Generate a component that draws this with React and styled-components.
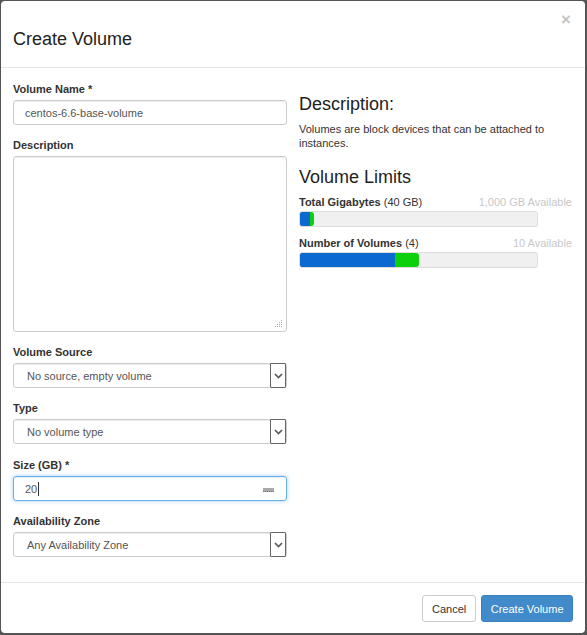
import React from 'react'
import styled, { createGlobalStyle } from 'styled-components'

const GlobalStyle = createGlobalStyle`
  html, body {
    margin: 0;
    padding: 0;
    background: #555;
    font-family: 'Liberation Sans', Arial, sans-serif;
    color: #333;
  }
`

const Modal = styled.div`
  box-sizing: border-box;
  width: 584px;
  height: 632px;
  margin: 1px 0 0 1px;
  background: #fff;
  border-radius: 4px;
  display: flex;
  flex-direction: column;
`

const Header = styled.div`
  position: relative;
  box-sizing: border-box;
  height: 67px;
  padding: 10px 12px 0;
  display: flex;
  align-items: center;
  border-bottom: 1px solid #e5e5e5;
`

const Title = styled.h4`
  margin: 0;
  font-size: 18px;
  font-weight: normal;
  color: #222;
`

const Close = styled.span`
  position: absolute;
  right: 14px;
  top: 9px;
  font-size: 17px;
  font-weight: bold;
  color: #c4c4c4;
`

const Body = styled.div`
  flex: 1;
  display: grid;
  grid-template-columns: 274px 1fr;
  gap: 12px;
  padding: 14px 12px 12px;
`

const Column = styled.div`
  display: flex;
  flex-direction: column;
`

const Group = styled.div`
  margin-bottom: ${p => p.$gap || 13}px;
  &:last-child { margin-bottom: 0; }
`

const Label = styled.div`
  font-size: 11px;
  line-height: 14px;
  font-weight: bold;
  color: #333;
  margin-bottom: 4px;
`

const Field = styled.div`
  position: relative;
  box-sizing: border-box;
  height: ${p => p.$tall ? '176px' : '25px'};
  border: 1px solid ${p => p.$focus ? '#66afe9' : '#ccc'};
  border-radius: 3px;
  box-shadow: ${p => p.$focus ? 'inset 0 1px 1px rgba(0,0,0,.075), 0 0 4px rgba(102,175,233,.6)' : 'inset 0 1px 1px rgba(0,0,0,.075)'};
  padding: 0 ${p => p.$select ? '13px' : '11px'};
  display: flex;
  align-items: center;
  font-size: 11px;
  color: #555;
`

const Caret = styled.span`
  display: inline-block;
  width: 1px;
  height: 14px;
  background: #333;
  margin-left: 1px;
`

const Spinner = styled.span`
  position: absolute;
  right: 12px;
  top: 11px;
  width: 11px;
  height: 3px;
  background: #aaa;
  border-bottom: 1px dotted #777;
`

const Arrow = styled.span`
  position: absolute;
  right: 0;
  top: -1px;
  bottom: -1px;
  width: 16px;
  box-sizing: border-box;
  border: 1px solid #666;
  border-radius: 1px;
  background: #fff;
  display: flex;
  align-items: center;
  justify-content: center;
`

const Grip = styled.svg`
  position: absolute;
  right: 3px;
  bottom: 3px;
`

const Heading = styled.h3`
  margin: ${p => p.$first ? '12px' : '0'} 0 0;
  font-size: 18px;
  line-height: 20px;
  font-weight: normal;
  color: #222;
`

const Text = styled.p`
  margin: 8px 0 17px;
  font-size: 11px;
  line-height: 14px;
  color: #333;
`

const Limit = styled.div`
  width: 273px;
  margin-top: ${p => p.$first ? '8px' : '9px'};
`

const LimitHead = styled.div`
  display: flex;
  justify-content: space-between;
  font-size: 11px;
  line-height: 14px;
  color: #333;
  b { font-weight: bold; }
`

const Avail = styled.span`
  color: #c8c8c8;
`

const Track = styled.div`
  box-sizing: border-box;
  width: 239px;
  height: 16px;
  margin-top: 2px;
  background: #f0f0f0;
  border: 1px solid #ddd;
  border-radius: 3px;
  display: flex;
  overflow: hidden;
`

const Fill = styled.div`
  height: 100%;
  background: ${p => p.$color};
  border-radius: ${p => p.$last ? '0 3px 3px 0' : '0'};
`

const Footer = styled.div`
  height: 51px;
  box-sizing: border-box;
  border-top: 1px solid #e5e5e5;
  padding: 12px 12px 0;
  display: flex;
  justify-content: flex-end;
  gap: 5px;
`

const Button = styled.button`
  height: 27px;
  padding: 0 ${p => p.$primary ? '8.5px' : '9px'};
  font-family: inherit;
  font-size: 11px;
  border-radius: 3px;
  border: 1px solid ${p => p.$primary ? '#3a81c2' : '#ccc'};
  background: ${p => p.$primary ? '#428bca' : '#fff'};
  color: ${p => p.$primary ? '#fff' : '#333'};
`

const Chevron = () => (
  <svg width="9" height="6" viewBox="0 0 9 6">
    <path d="M1 1 L4.5 4.5 L8 1" fill="none" stroke="#555" strokeWidth="1.6" />
  </svg>
)

const Select = ({ children }) => (
  <Field $select>
    {children}
    <Arrow><Chevron /></Arrow>
  </Field>
)

const limits = [
  { name: 'Total Gigabytes', note: '(40 GB)', avail: '1,000 GB Available', used: 10, added: 4 },
  { name: 'Number of Volumes', note: '(4)', avail: '10 Available', used: 95, added: 24 },
]

export default function App() {
  return (
    <>
      <GlobalStyle />
      <Modal>
        <Header>
          <Title>Create Volume</Title>
          <Close>×</Close>
        </Header>
        <Body>
          <Column>
            <Group>
              <Label>Volume Name *</Label>
              <Field>centos-6.6-base-volume</Field>
            </Group>
            <Group>
              <Label>Description</Label>
              <Field $tall>
                <Grip width="8" height="8" viewBox="0 0 8 8">
                  <g fill="#aaa">
                    <rect x="6" y="0" width="1" height="1" />
                    <rect x="4" y="2" width="1" height="1" />
                    <rect x="6" y="2" width="1" height="1" />
                    <rect x="2" y="4" width="1" height="1" />
                    <rect x="4" y="4" width="1" height="1" />
                    <rect x="6" y="4" width="1" height="1" />
                    <rect x="0" y="6" width="1" height="1" />
                    <rect x="2" y="6" width="1" height="1" />
                    <rect x="4" y="6" width="1" height="1" />
                    <rect x="6" y="6" width="1" height="1" />
                  </g>
                </Grip>
              </Field>
            </Group>
            <Group>
              <Label>Volume Source</Label>
              <Select>No source, empty volume</Select>
            </Group>
            <Group $gap={14}>
              <Label>Type</Label>
              <Select>No volume type</Select>
            </Group>
            <Group>
              <Label>Size (GB) *</Label>
              <Field $focus>20<Caret /><Spinner /></Field>
            </Group>
            <Group>
              <Label>Availability Zone</Label>
              <Select>Any Availability Zone</Select>
            </Group>
          </Column>
          <Column>
            <Heading $first>Description:</Heading>
            <Text>Volumes are block devices that can be attached to<br />instances.</Text>
            <Heading>Volume Limits</Heading>
            {limits.map((l, i) => (
              <Limit key={l.name} $first={i === 0}>
                <LimitHead>
                  <span><b>{l.name}</b> {l.note}</span>
                  <Avail>{l.avail}</Avail>
                </LimitHead>
                <Track>
                  <Fill $color="#0b69cf" style={{ width: l.used }} />
                  <Fill $color="#0bd00b" $last style={{ width: l.added }} />
                </Track>
              </Limit>
            ))}
          </Column>
        </Body>
        <Footer>
          <Button>Cancel</Button>
          <Button $primary>Create Volume</Button>
        </Footer>
      </Modal>
    </>
  )
}
